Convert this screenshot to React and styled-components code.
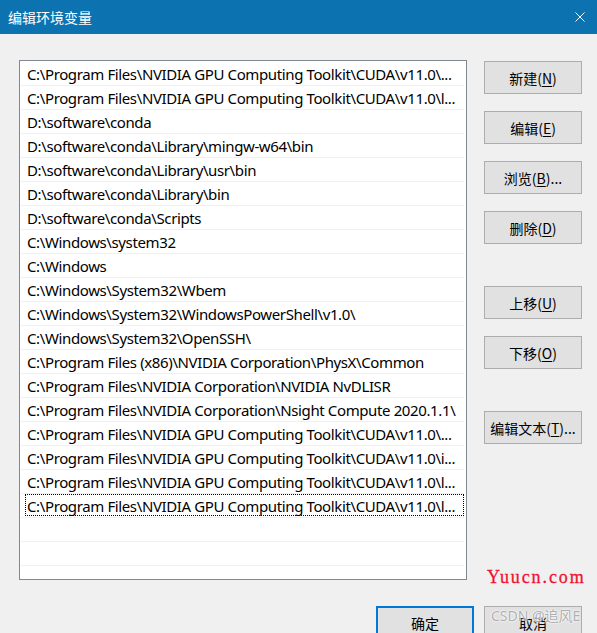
import React from "react";
import styled, { createGlobalStyle } from "styled-components";

const GlobalStyle = createGlobalStyle`
  html, body { margin: 0; padding: 0; background: #f0f0f0; }
  body { font-family: "Noto Sans", "Noto Sans CJK SC", sans-serif; }
  * { box-sizing: border-box; }
`;

const Window = styled.div`
  position: relative;
  width: 597px;
  height: 633px;
  overflow: hidden;
  background: #f0f0f0;
`;

const TitleBar = styled.div`
  height: 34px;
  background: #0c72b0;
  display: flex;
  align-items: center;
  justify-content: space-between;
  padding: 0 12px 0 8px;
`;

const Title = styled.span`
  color: #ffffff;
  font-family: "Noto Sans CJK SC", sans-serif;
  font-size: 14px;
  line-height: 34px;
`;

const CloseIcon = styled.svg`
  width: 10px;
  height: 10px;
  display: block;
`;

const Main = styled.div`
  display: flex;
  align-items: flex-start;
  padding: 26px 15px 0 19px;
`;

const List = styled.div`
  width: 448px;
  height: 520px;
  border: 1px solid #828790;
  background: #ffffff;
  padding: 1px 2px 0 1px;
  overflow: hidden;
`;

const Row = styled.div`
  position: relative;
  height: 24px;
  padding: 1px 0 0 6px;
  line-height: 23px;
  border-bottom: 1px solid #f0f0f0;
  font-size: 15px;
  color: #000;
  white-space: nowrap;
  overflow: hidden;
  letter-spacing: -0.38px;

  ${(p) =>
    p.$focused &&
    `
    &::after {
      content: "";
      position: absolute;
      left: 4px;
      right: 0;
      top: 0;
      bottom: 1px;
      border: 1px dotted #000;
    }
  `}
`;

const ButtonColumn = styled.div`
  display: flex;
  flex-direction: column;
  margin-left: 17px;
  padding-top: 1px;
`;

const Button = styled.button`
  width: 98px;
  height: 33px;
  margin-top: ${(p) => p.$gap || 0}px;
  background: #e1e1e1;
  border: ${(p) => (p.$default ? "2px solid #0078d7" : "1px solid #adadad")};
  font-family: "Noto Sans CJK SC", sans-serif;
  font-size: 14px;
  color: #000;
  padding: 0;
  display: flex;
  align-items: center;
  justify-content: center;
  cursor: default;

  u {
    text-decoration: underline;
    text-underline-offset: 2px;
  }
`;

const Footer = styled.div`
  display: flex;
  justify-content: flex-end;
  gap: 10px;
  padding: 26px 15px 0 0;
`;

const SiteMark = styled.div`
  position: absolute;
  left: 487px;
  top: 567px;
  font-family: "Liberation Serif", serif;
  font-size: 18px;
  letter-spacing: 1.9px;
  color: #f01232;
  line-height: 20px;
  -webkit-text-stroke: 0.3px #f01232;
`;

const Watermark = styled.div`
  position: absolute;
  left: 491px;
  top: 606px;
  font-family: "Noto Sans", "Noto Sans CJK SC", sans-serif;
  font-size: 14px;
  line-height: 20px;
  color: rgba(150, 150, 150, 0.75);
  text-shadow: 0 0 2px #fff, 0 0 2px #fff;
  white-space: nowrap;
`;

const cuda = "C:\\Program Files\\NVIDIA GPU Computing Toolkit\\CUDA\\v11.0\\";

const paths = [
  cuda + "...",
  cuda + "l...",
  "D:\\software\\conda",
  "D:\\software\\conda\\Library\\mingw-w64\\bin",
  "D:\\software\\conda\\Library\\usr\\bin",
  "D:\\software\\conda\\Library\\bin",
  "D:\\software\\conda\\Scripts",
  "C:\\Windows\\system32",
  "C:\\Windows",
  "C:\\Windows\\System32\\Wbem",
  "C:\\Windows\\System32\\WindowsPowerShell\\v1.0\\",
  "C:\\Windows\\System32\\OpenSSH\\",
  "C:\\Program Files (x86)\\NVIDIA Corporation\\PhysX\\Common",
  "C:\\Program Files\\NVIDIA Corporation\\NVIDIA NvDLISR",
  "C:\\Program Files\\NVIDIA Corporation\\Nsight Compute 2020.1.1\\",
  cuda + "...",
  cuda + "i...",
  cuda + "l...",
  cuda + "l...",
];

const buttons = [
  { label: "新建", key: "N", gap: 0 },
  { label: "编辑", key: "E", gap: 17 },
  { label: "浏览", key: "B", gap: 17, dots: true },
  { label: "删除", key: "D", gap: 17 },
  { label: "上移", key: "U", gap: 42 },
  { label: "下移", key: "O", gap: 17 },
  { label: "编辑文本", key: "T", gap: 42, dots: true },
];

export default function App() {
  return (
    <>
      <GlobalStyle />
      <Window>
        <TitleBar>
          <Title>编辑环境变量</Title>
          <CloseIcon viewBox="0 0 10 10">
            <path d="M0.5 0.5 L9.5 9.5 M9.5 0.5 L0.5 9.5" stroke="#fff" strokeWidth="1" fill="none" />
          </CloseIcon>
        </TitleBar>
        <Main>
          <List>
            {paths.map((p, i) => (
              <Row key={i} $focused={i === paths.length - 1}>
                {p}
              </Row>
            ))}
            <Row />
            <Row />
            <Row />
          </List>
          <ButtonColumn>
            {buttons.map((b) => (
              <Button key={b.key} $gap={b.gap}>
                {b.label}(<u>{b.key}</u>){b.dots ? "..." : ""}
              </Button>
            ))}
          </ButtonColumn>
        </Main>
        <Footer>
          <Button $default>确定</Button>
          <Button>取消</Button>
        </Footer>
        <SiteMark>Yuucn.com</SiteMark>
        <Watermark>CSDN @追风E</Watermark>
      </Window>
    </>
  );
}
